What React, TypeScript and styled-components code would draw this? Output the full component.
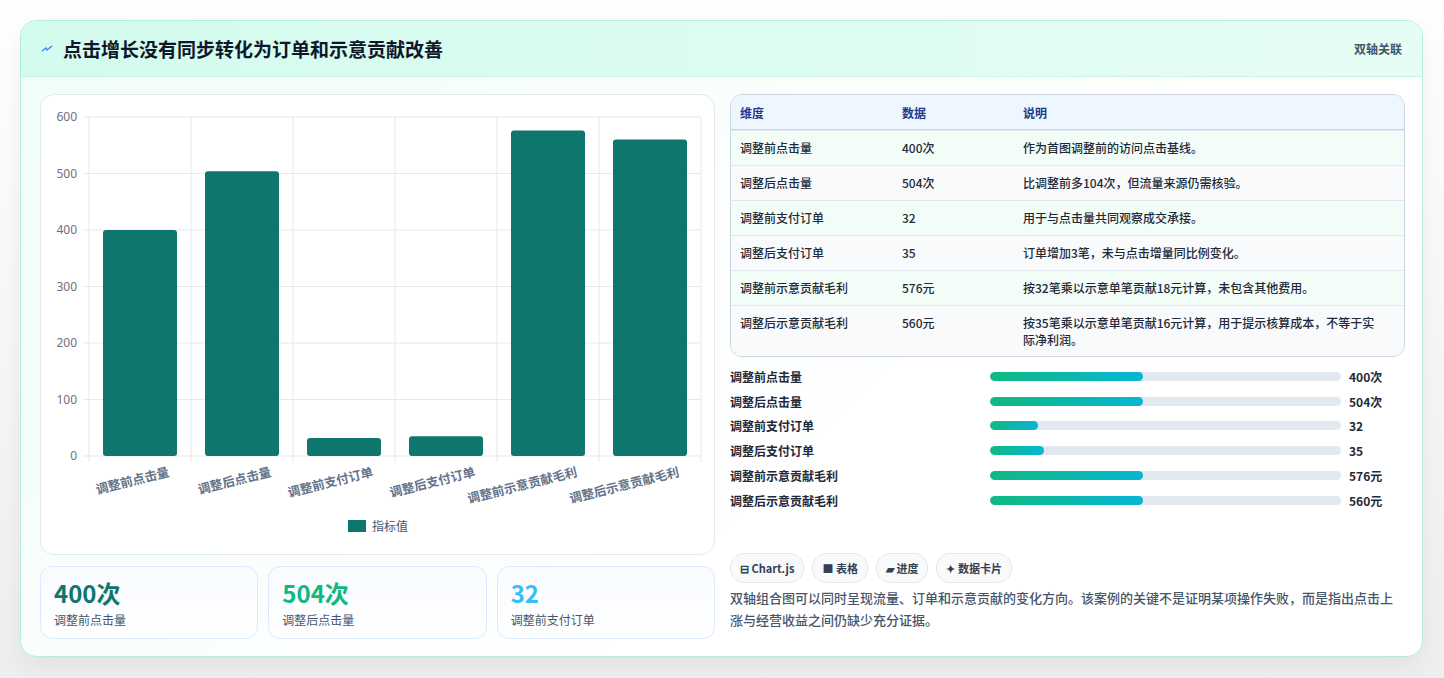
import styled, { createGlobalStyle } from "styled-components";

const Global = createGlobalStyle`
  body { margin: 0; background: #f3f4f6; font-family: "Noto Sans CJK SC", "Noto Sans", sans-serif; }
`;

const items = [
  { name: "调整前点击量", value: 400, unit: "次", note: "作为首图调整前的访问点击基线。", pct: 43.6 },
  { name: "调整后点击量", value: 504, unit: "次", note: "比调整前多104次，但流量来源仍需核验。", pct: 43.6 },
  { name: "调整前支付订单", value: 32, unit: "", note: "用于与点击量共同观察成交承接。", pct: 13.7 },
  { name: "调整后支付订单", value: 35, unit: "", note: "订单增加3笔，未与点击增量同比例变化。", pct: 15.4 },
  { name: "调整前示意贡献毛利", value: 576, unit: "元", note: "按32笔乘以示意单笔贡献18元计算，未包含其他费用。", pct: 43.6 },
  { name: "调整后示意贡献毛利", value: 560, unit: "元", note: "按35笔乘以示意单笔贡献16元计算，用于提示核算成本，不等于实际净利润。", pct: 43.6 },
];

const Page = styled.div`
  width: 1444px;
  height: 678px;
  padding: 20px;
  box-sizing: border-box;
  background: linear-gradient(180deg, #ffffff 0%, #eeeeee 100%);
`;

const Card = styled.div`
  width: 1403px;
  height: 637px;
  border: 1px solid #b9ece0;
  border-radius: 16px;
  background: linear-gradient(135deg, #f0fdf8 0%, #ffffff 60%);
  overflow: hidden;
  box-shadow: 0 8px 24px rgba(0, 0, 0, 0.06);
  display: flex;
  flex-direction: column;
  box-sizing: border-box;
`;

const Header = styled.div`
  height: 55px;
  flex-shrink: 0;
  display: flex;
  align-items: center;
  justify-content: space-between;
  padding: 0 20px;
  background: linear-gradient(90deg, #d3fbee 0%, #e6fdf6 100%);
  border-bottom: 1px solid #c9f2e6;
`;

const Title = styled.h1`
  margin: 0;
  font-size: 19px;
  font-weight: 700;
  color: #0f172a;
  display: flex;
  align-items: center;
  gap: 10px;
`;

const Badge = styled.span`
  font-size: 12px;
  color: #475569;
  font-weight: 600;
`;

const Body = styled.div`
  flex: 1;
  display: grid;
  grid-template-columns: 675px 675px;
  gap: 15px;
  padding: 17px 19px 18px 19px;
`;

const Col = styled.div`
  display: flex;
  flex-direction: column;
  gap: 11px;
  min-height: 0;
`;

const ChartPanel = styled.div`
  height: 461px;
  background: #fff;
  border: 1px solid #e2e8f0;
  border-radius: 14px;
  box-sizing: border-box;
  overflow: hidden;
`;

const Stats = styled.div`
  display: grid;
  grid-template-columns: repeat(3, 1fr);
  gap: 10px;
`;

const Stat = styled.div`
  height: 73px;
  box-sizing: border-box;
  border: 1px solid #dbeafe;
  border-radius: 12px;
  background: linear-gradient(180deg, #f8fbff 0%, #ffffff 100%);
  padding: 10px 13px;
`;

const StatValue = styled.div<{ $c: string }>`
  font-size: 24px;
  font-weight: 700;
  color: ${(p) => p.$c};
  line-height: 32px;
`;

const StatLabel = styled.div`
  font-size: 12px;
  color: #475569;
  margin-top: 2px;
`;

const Table = styled.div`
  border: 1px solid #cbd5e1;
  border-radius: 12px;
  overflow: hidden;
  background: #fff;
`;

const Row = styled.div<{ $head?: boolean; $alt?: boolean }>`
  display: grid;
  grid-template-columns: 162px 121px 1fr;
  padding: 8px 9px;
  min-height: 35px;
  box-sizing: border-box;
  font-size: 12px;
  line-height: 17px;
  align-items: start;
  color: ${(p) => (p.$head ? "#1e3a8a" : "#1f2937")};
  font-weight: ${(p) => (p.$head ? 600 : 500)};
  background: ${(p) => (p.$head ? "#eef6ff" : p.$alt ? "#f8fafc" : "#f2fdf8")};
  border-top: ${(p) => (p.$head ? "none" : "1px solid #e2e8f0")};
  ${(p) => (p.$head ? "border-bottom: 1px solid #cbd5e1; height: 33px; align-items: center;" : "")}
`;

const Cell = styled.div`
  padding-right: 12px;
`;

const Bars = styled.div`
  display: flex;
  flex-direction: column;
  margin-top: 7px;
`;

const BarRow = styled.div`
  display: grid;
  grid-template-columns: 252px 351px 1fr;
  gap: 8px;
  align-items: center;
  height: 24.8px;
  font-size: 12px;
  font-weight: 600;
  color: #1f2937;
`;

const Track = styled.div`
  height: 9px;
  border-radius: 5px;
  background: #e2e8f0;
  overflow: hidden;
`;

const Fill = styled.div`
  height: 100%;
  border-radius: 5px;
  background: linear-gradient(90deg, #10b981, #06b6d4);
`;

const Tags = styled.div`
  display: flex;
  gap: 8px;
  margin-top: auto;
`;

const Tag = styled.span`
  height: 28px;
  padding: 0 9px;
  display: inline-flex;
  align-items: center;
  gap: 4px;
  border: 1px solid #e2e8f0;
  border-radius: 14px;
  background: #f8fafc;
  font-size: 11px;
  font-weight: 600;
  color: #334155;
`;

const Desc = styled.p`
  margin: 4px 0 8px;
  font-size: 13px;
  line-height: 22px;
  color: #475569;
  font-weight: 500;
`;

const Chart = () => {
  const x0 = 48, x1 = 660, yTop = 22, yBot = 361;
  const scale = (yBot - yTop) / 600;
  const w = (x1 - x0) / 6;
  return (
    <svg width="674" height="461" viewBox="0 0 674 461" style={{ display: "block" }}>
      {[0, 100, 200, 300, 400, 500, 600].map((t) => {
        const y = yBot - t * scale;
        return (
          <g key={t}>
            <line x1={x0 - 6} x2={x1} y1={y} y2={y} stroke="#e5e7eb" />
            <text x={36} y={y + 4} textAnchor="end" fontSize="12" fill="#6b7280" fontFamily="Noto Sans">{t}</text>
          </g>
        );
      })}
      {Array.from({ length: 7 }).map((_, i) => (
        <line key={i} x1={x0 + i * w} x2={x0 + i * w} y1={yTop} y2={yBot + 6} stroke="#e5e7eb" />
      ))}
      {items.map((it, i) => {
        const h = it.value * scale;
        const bx = x0 + i * w + 14;
        return (
          <g key={it.name}>
            <rect x={bx} y={yBot - h} width={w - 28} height={h} rx="3" fill="#0e766d" />
            <text
              x={x0 + i * w + w / 2 + 30}
              y={yBot + 20}
              textAnchor="end"
              fontSize="12.5"
              fontWeight="600"
              fill="#64748b"
              transform={`rotate(-14 ${x0 + i * w + w / 2 + 30} ${yBot + 20})`}
            >
              {it.name}
            </text>
          </g>
        );
      })}
      <rect x={307} y={425} width={18} height={12} fill="#0e766d" />
      <text x={331} y={436} fontSize="12" fill="#475569">指标值</text>
    </svg>
  );
};

export default function App() {
  return (
    <>
      <Global />
      <Page>
        <Card>
          <Header>
            <Title>
              <svg width="12" height="10" viewBox="0 0 12 10">
                <path d="M1 7 L5 4 L6 6 L11 2" stroke="#3b82f6" strokeWidth="1.4" fill="none" />
              </svg>
              点击增长没有同步转化为订单和示意贡献改善
            </Title>
            <Badge>双轴关联</Badge>
          </Header>
          <Body>
            <Col>
              <ChartPanel>
                <Chart />
              </ChartPanel>
              <Stats>
                <Stat>
                  <StatValue $c="#0f766e">400次</StatValue>
                  <StatLabel>调整前点击量</StatLabel>
                </Stat>
                <Stat>
                  <StatValue $c="#10b981">504次</StatValue>
                  <StatLabel>调整后点击量</StatLabel>
                </Stat>
                <Stat>
                  <StatValue $c="#38bdf8">32</StatValue>
                  <StatLabel>调整前支付订单</StatLabel>
                </Stat>
              </Stats>
            </Col>
            <Col style={{ gap: 0 }}>
              <Table>
                <Row $head>
                  <Cell>维度</Cell>
                  <Cell>数据</Cell>
                  <Cell>说明</Cell>
                </Row>
                {items.map((it, i) => (
                  <Row key={it.name} $alt={i % 2 === 1}>
                    <Cell>{it.name}</Cell>
                    <Cell>{it.value}{it.unit}</Cell>
                    <Cell>{it.note}</Cell>
                  </Row>
                ))}
              </Table>
              <Bars>
                {items.map((it) => (
                  <BarRow key={it.name}>
                    <span>{it.name}</span>
                    <Track>
                      <Fill style={{ width: `${it.pct}%` }} />
                    </Track>
                    <span>{it.value}{it.unit}</span>
                  </BarRow>
                ))}
              </Bars>
              <Tags>
                <Tag>⊟ Chart.js</Tag>
                <Tag>■ 表格</Tag>
                <Tag>▰ 进度</Tag>
                <Tag>✦ 数据卡片</Tag>
              </Tags>
              <Desc>
                双轴组合图可以同时呈现流量、订单和示意贡献的变化方向。该案例的关键不是证明某项操作失败，而是指出点击上涨与经营收益之间仍缺少充分证据。
              </Desc>
            </Col>
          </Body>
        </Card>
      </Page>
    </>
  );
}
